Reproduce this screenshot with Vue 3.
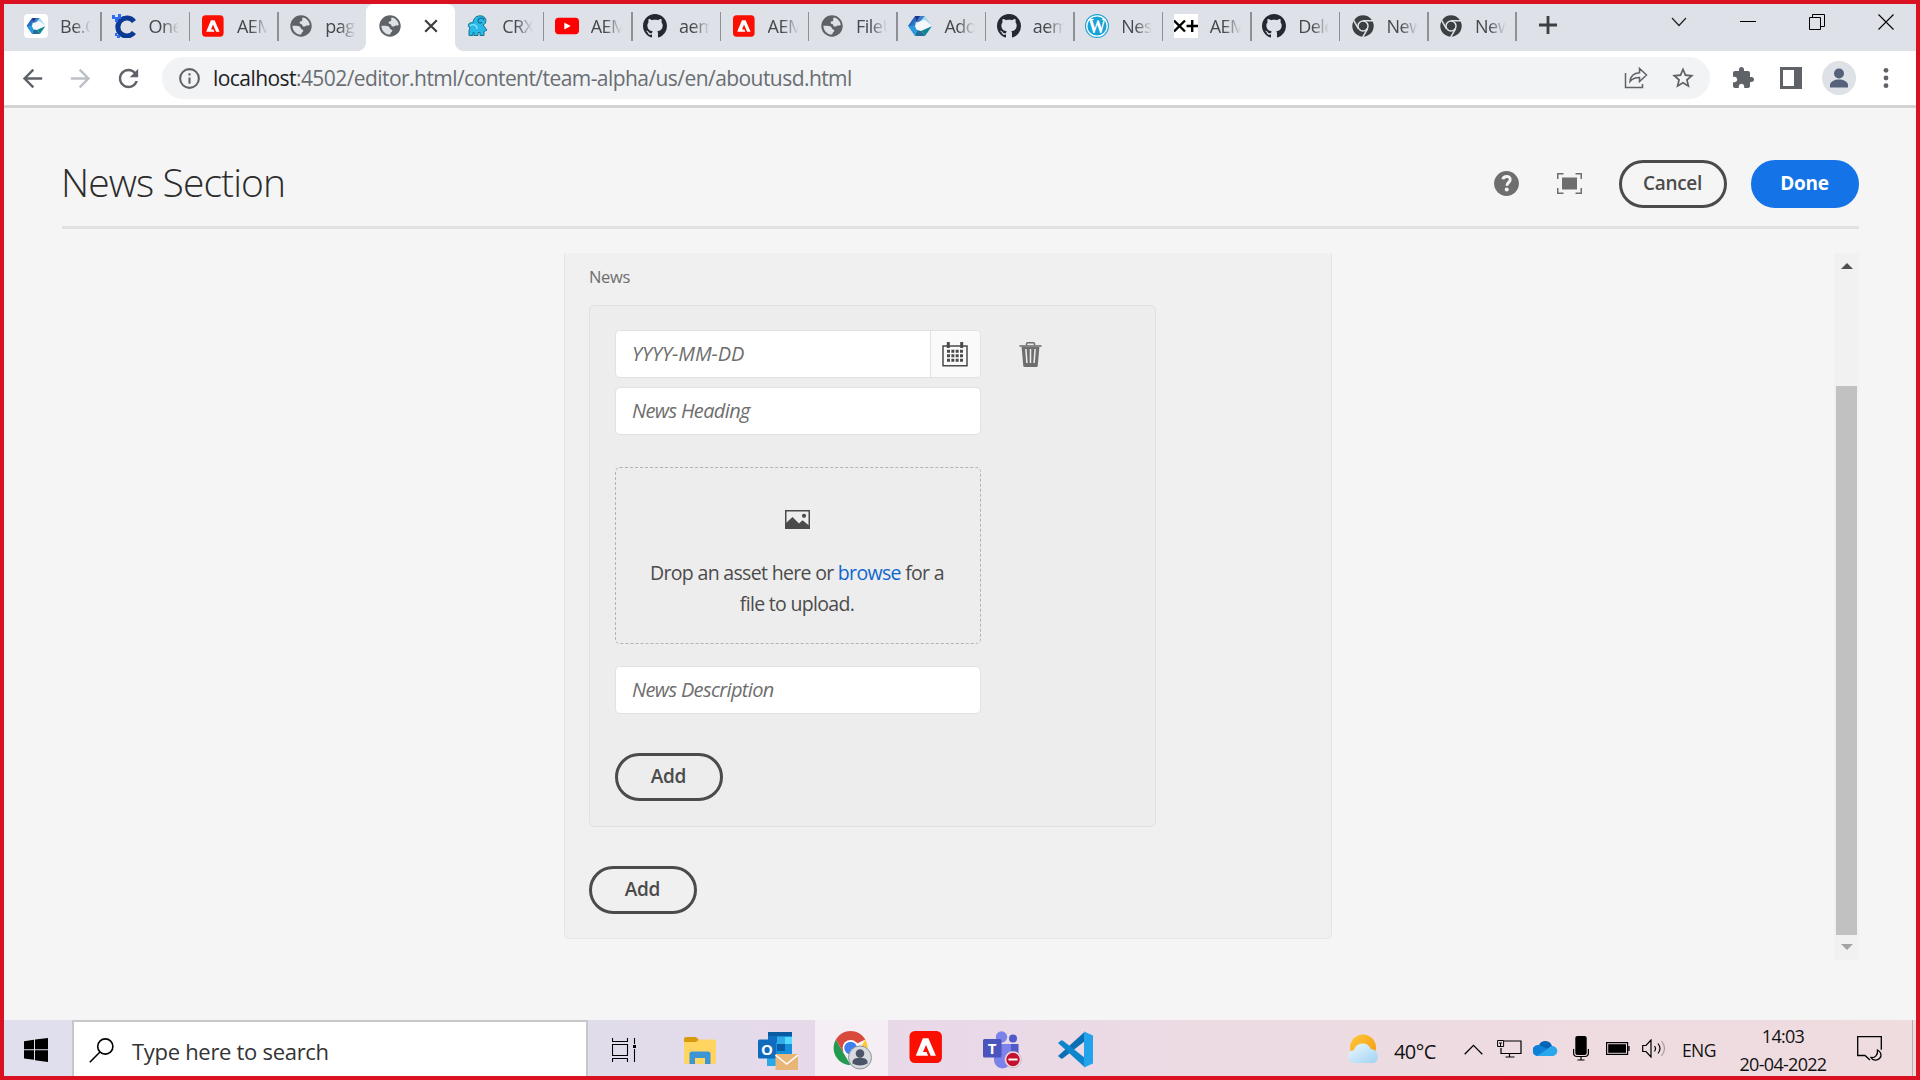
<script setup>
import { ref } from 'vue'

const tabs = [
  { icon: 'be', title: 'Be.C' },
  { icon: 'one', title: 'One' },
  { icon: 'adobe', title: 'AEM' },
  { icon: 'globe', title: 'pag' },
  { icon: 'globe', title: '', active: true },
  { icon: 'crx', title: 'CRX' },
  { icon: 'youtube', title: 'AEM' },
  { icon: 'github', title: 'aem' },
  { icon: 'adobe', title: 'AEM' },
  { icon: 'globe', title: 'FileU' },
  { icon: 'hex', title: 'Ado' },
  { icon: 'github', title: 'aem' },
  { icon: 'wordpress', title: 'Nes' },
  { icon: 'xplus', title: 'AEM' },
  { icon: 'github', title: 'Dele' },
  { icon: 'chromium', title: 'New' },
  { icon: 'chromium', title: 'New' }
]

const date = ref('')
const heading = ref('')
const description = ref('')
</script>

<template>
  <div class="screen">
    <svg class="sprites" width="0" height="0" aria-hidden="true">
      <defs>
        <linearGradient id="hexDark" x1="0" y1="0" x2="1" y2="1">
          <stop offset="0" stop-color="#1c1f8c" />
          <stop offset="1" stop-color="#2f9be0" />
        </linearGradient>
        <linearGradient id="sun" x1="0" y1="0" x2="1" y2="1">
          <stop offset="0" stop-color="#ffc93a" />
          <stop offset="1" stop-color="#f6960c" />
        </linearGradient>
        <linearGradient id="cloud" x1="0" y1="0" x2="1" y2="1">
          <stop offset="0" stop-color="#eef9ff" />
          <stop offset="1" stop-color="#9fd2f2" />
        </linearGradient>
      </defs>
      <symbol id="hex" viewBox="0 0 24 24">
        <path d="M7 2h10l-5 6H8z" fill="#3b7fc4" />
        <path d="M7 2l1 6-1 4H0z" fill="url(#hexDark)" />
        <path d="M7 2h5l-4 6z" fill="#20308f" />
        <path d="M0 12h7l2 4-2 6z" fill="#2a98de" />
        <path d="M7 22l2-6h4l4 6z" fill="#1f6f9c" />
        <path d="M13 16l11-4-7 10z" fill="#0f8793" />
        <path d="M17 2l7 10-8-5-4 1z" fill="#a8d8f0" />
        <path d="M12 7l5-1 7 6-11 5-4-1-2-4z" fill="#f4f8fc" />
      </symbol>
      <symbol id="be" viewBox="0 0 24 24">
        <rect width="24" height="24" rx="4" fill="#fff" />
        <use href="#hex" x="2.5" y="2.5" width="19" height="19" />
      </symbol>
      <symbol id="one" viewBox="0 0 24 24">
        <path d="M22 7.5A9 9 0 1 0 22 18.5" fill="none" stroke="#0b3a94" stroke-width="5" />
        <path d="M0 1h3v2h3V0h3v5H6v3H3V5H0zM3 19h2v2h3v3H5v-2H3z" fill="#2e6cf6" />
      </symbol>
      <symbol id="adobe" viewBox="0 0 24 24">
        <rect x="1" y="1.3" width="21.6" height="21.4" rx="3.6" fill="#fa0f00" />
        <path d="M9.9 6.2h3.7l5 11.6h-3.5L12 10.6l-2 4.8h2.4l1 2.4H5.2z" fill="#fff" />
      </symbol>
      <symbol id="globe" viewBox="0 0 24 24">
        <circle cx="12" cy="12" r="10.7" fill="#5f6368" />
        <path d="M13.8 3.5c3.5.6 6.4 3.5 6.9 7.2-1.2 1.6-2.8.3-4 1.3-1.2 1-3.4.6-3.5-1-.1-1.3-2.6-.7-2.6-2.2 0-1.7 2.5-1 2.7-2.5.1-1-.7-1.6.5-2.8z" fill="#dee1e6" />
        <path d="M3.4 11.7c2.8 0 6.4-.2 7.8 1.3 1 1.1.4 2.1 2 2.4 1.5.3 1.3 1.9.3 2.7-1 .7-.5 1.7-1.7 2.5-4.7-.1-8.3-4-8.4-8.9z" fill="#dee1e6" />
      </symbol>
      <symbol id="crx" viewBox="0 0 24 24">
        <path d="M3 13C1 10 4 8 7 9c0-5 4-8 9-7 5 1 5 8 1 9l4 5-3 1.500v4h-4v-3h-2v3H8v-3H7v3H3v-5l1-3z" fill="#29b8e8" stroke="#16758f" />
        <path d="M18 6c-1-3-6-2-6 1 0 2 3 3 4 1" fill="none" stroke="#0f6d8a" stroke-width="1.200" />
        <path d="M4 12c3-3 7-1 7 3" fill="none" stroke="#7be0f8" stroke-width="1.500" />
      </symbol>
      <symbol id="youtube" viewBox="0 0 24 24">
        <rect y="3.8" width="24" height="16.4" rx="3.6" fill="#f00" />
        <path d="M9.3 8.4v7.2l6.400-3.600z" fill="#fff" />
      </symbol>
      <symbol id="github" viewBox="0 0 16 16">
        <path fill="#24292f" d="M8 0C3.580 0 0 3.580 0 8c0 3.540 2.290 6.530 5.470 7.590.4.070.55-.17.55-.38 0-.19-.01-.82-.01-1.490-2.010.370-2.530-.490-2.690-.940-.090-.230-.480-.940-.820-1.130-.280-.150-.680-.520-.010-.530.630-.010 1.080.580 1.230.820.720 1.210 1.870.870 2.330.660.070-.520.280-.870.510-1.070-1.780-.200-3.640-.890-3.640-3.950 0-.870.310-1.590.820-2.150-.080-.200-.360-1.020.080-2.120 0 0 .670-.210 2.200.820.640-.180 1.320-.270 2-.270.680 0 1.360.090 2 .270 1.530-1.040 2.200-.820 2.200-.820.440 1.100.160 1.920.080 2.120.510.560.820 1.270.820 2.150 0 3.070-1.870 3.750-3.650 3.950.290.250.540.730.540 1.480 0 1.070-.010 1.930-.010 2.200 0 .210.150.460.550.380A8.010 8.010 0 0 0 16 8c0-4.420-3.580-8-8-8z" />
      </symbol>
      <symbol id="wordpress" viewBox="0 0 24 24">
        <circle cx="12" cy="12" r="12" fill="#17a3d6" />
        <circle cx="12" cy="12" r="10.2" fill="none" stroke="#fff" stroke-width="1.300" />
        <text class="wp" x="12" y="18.500" text-anchor="middle" textLength="18" lengthAdjust="spacingAndGlyphs" fill="#fff">W</text>
      </symbol>
      <symbol id="xplus" viewBox="0 0 24 24">
        <rect width="24" height="24" fill="#fff" />
        <path d="M0 6.500l11 11M11 6.500l-11 11M12.500 12H24M18.200 6v12" stroke="#000" stroke-width="2.400" fill="none" />
      </symbol>
      <symbol id="chromium" viewBox="0 0 24 24">
        <circle cx="12" cy="12" r="10.7" fill="#3c4043" />
        <circle cx="12" cy="12" r="5" fill="none" stroke="#dee1e6" stroke-width="1.500" />
        <path d="M12 6.700h10M7.300 14.600L2.500 6.200M16.700 14.600l-5 8.500" stroke="#dee1e6" stroke-width="1.500" />
      </symbol>
    </svg>

    <header class="tabstrip">
      <div v-for="(tab, i) in tabs" :key="i" class="tab" :class="{ active: tab.active, plain: i === 3 }">
        <svg class="favicon"><use :href="'#' + tab.icon" /></svg>
        <span v-if="!tab.active" class="tab-title">{{ tab.title }}</span>
        <svg v-else class="tab-close" viewBox="0 0 12 12"><path d="M1 1l10 10M11 1L1 11" stroke="#3c4043" stroke-width="1.900" /></svg>
      </div>
      <svg class="new-tab" viewBox="0 0 18 18"><path d="M9 0v18M0 9h18" stroke="#3c4043" stroke-width="2.800" /></svg>
      <div class="window-controls">
        <svg width="16" height="10" viewBox="0 0 16 10"><path d="M1 1l7 7.500L15 1" fill="none" stroke="#222" stroke-width="1.200" /></svg>
        <svg width="16" height="16" viewBox="0 0 16 16"><path d="M0 7.500h16" stroke="#000" /></svg>
        <svg width="16" height="16" viewBox="0 0 16 16"><path d="M.5 3.500h11v12H.5zM3.500 3.500v-3h12v12h-4" fill="none" stroke="#000" /></svg>
        <svg width="16" height="16" viewBox="0 0 16 16"><path d="M.5.5l15 15M15.500.5l-15 15" stroke="#000" stroke-width="1.100" /></svg>
      </div>
    </header>

    <nav class="toolbar">
      <svg class="nav-icon" viewBox="0 0 24 24"><path fill="#5f6368" d="M20 11H7.830l5.590-5.590L12 4l-8 8 8 8 1.410-1.410L7.830 13H20z" /></svg>
      <svg class="nav-icon" viewBox="0 0 24 24"><path fill="#bdc1c6" d="M4 11h12.170l-5.590-5.590L12 4l8 8-8 8-1.410-1.410L16.170 13H4z" /></svg>
      <svg class="nav-icon" viewBox="0 0 24 24"><path fill="#5f6368" d="M17.650 6.350C16.200 4.900 14.210 4 12 4c-4.420 0-7.990 3.580-7.990 8s3.570 8 7.990 8c3.730 0 6.840-2.550 7.730-6h-2.080c-.82 2.330-3.040 4-5.650 4-3.310 0-6-2.690-6-6s2.690-6 6-6c1.660 0 3.140.69 4.220 1.780L13 11h7V4z" /></svg>
      <div class="omnibox">
        <svg width="25" height="25" viewBox="0 0 24 24"><circle cx="12" cy="12" r="9" fill="none" stroke="#5f6368" stroke-width="2" /><path d="M11 7h2v2h-2zM11 11h2v6h-2z" fill="#5f6368" /></svg>
        <span class="url"><b>localhost</b>:4502/editor.html/content/team-alpha/us/en/aboutusd.html</span>
        <svg class="share" width="24" height="24" viewBox="0 0 24 24"><path d="M1.500 7v14.500h17V18M6 15.500c.5-6 4-8.500 9.500-8.800V2.500l7 6.500-7 6.500v-4c-4-.1-7 1-9.500 4z" fill="none" stroke="#5f6368" stroke-width="1.500" /></svg>
        <svg width="26" height="26" viewBox="0 0 24 24"><path fill="#5f6368" d="M22 9.240l-7.190-.62L12 2 9.190 8.630 2 9.240l5.460 4.730L5.820 21 12 17.270 18.180 21l-1.630-7.030L22 9.240zM12 15.400l-3.760 2.270 1-4.280-3.320-2.880 4.380-.38L12 6.100l1.710 4.040 4.380.38-3.320 2.880 1 4.280L12 15.400z" /></svg>
      </div>
      <div class="actions">
        <svg width="24" height="24" viewBox="0 0 24 24"><path fill="#5f6368" d="M20.500 11H19V7c0-1.100-.9-2-2-2h-4V3.500C13 2.120 11.880 1 10.500 1S8 2.120 8 3.500V5H4c-1.100 0-1.990.9-1.990 2v3.800H3.500c1.490 0 2.700 1.210 2.700 2.700s-1.210 2.700-2.700 2.700H2V20c0 1.100.9 2 2 2h3.800v-1.500c0-1.490 1.210-2.700 2.700-2.700s2.700 1.210 2.700 2.700V22H17c1.100 0 2-.9 2-2v-4h1.500c1.380 0 2.500-1.120 2.500-2.500S21.880 11 20.500 11z" /></svg>
        <svg width="22" height="22" viewBox="0 0 22 22"><path fill="#5f6368" fill-rule="evenodd" d="M0 0h22v22H0zM3 3v16h11V3z" /></svg>
        <svg width="34" height="34" viewBox="0 0 34 34"><circle cx="17" cy="17" r="17" fill="#dee1e6" /><circle cx="17" cy="12.500" r="5" fill="#55607a" /><path d="M8 26.500v-2.500c0-3.500 5-5.500 9-5.500s9 2 9 5.500v2.500z" fill="#55607a" /></svg>
        <svg width="6" height="22" viewBox="0 0 6 22"><circle cx="3" cy="3.300" r="2.400" fill="#5f6368" /><circle cx="3" cy="11" r="2.400" fill="#5f6368" /><circle cx="3" cy="18.700" r="2.400" fill="#5f6368" /></svg>
      </div>
    </nav>

    <main class="page">
      <div class="dialog-header">
        <h1>News Section</h1>
        <svg class="help" width="25" height="25" viewBox="0 0 25 25"><circle cx="12.500" cy="12.500" r="12.400" fill="#6e6e6e" /><path d="M8.900 8.300c.6-3.700 7.300-3.900 7.300.1 0 3-3.300 3-3.300 6.300" fill="none" stroke="#f5f5f5" stroke-width="2.900" /><circle cx="12.700" cy="18.500" r="2" fill="#f5f5f5" /></svg>
        <svg class="full" width="25" height="21" viewBox="0 0 25 21"><path d="M.75 6V.75H6.500M18.500.75h5.750V6M24.250 15v5.250H18.500M6.500 20.250H.75V15" fill="none" stroke="#6e6e6e" stroke-width="1.500" /><path d="M5 4.500h15v12H5z" fill="#6e6e6e" /></svg>
        <button class="btn cancel">Cancel</button>
        <button class="btn primary">Done</button>
      </div>

      <div class="dialog-body">
        <section class="multifield outer">
          <label class="label">News</label>
          <div class="multifield inner">
            <div class="row">
              <div class="date">
                <input v-model="date" class="field" placeholder="YYYY-MM-DD">
                <span class="calendar">
                  <svg width="26" height="25" viewBox="0 0 26 25">
                    <path d="M1 4h24v19.800H1z" fill="none" stroke="#4b4b4b" stroke-width="1.500" />
                    <path d="M6.300 0v6M19.700 0v6" stroke="#4b4b4b" stroke-width="3" />
                    <path d="M5 9.200h16M5 13.700h16M5 18.200h16" stroke="#4b4b4b" stroke-width="3" stroke-dasharray="3 1.333" />
                  </svg>
                </span>
              </div>
              <svg class="trash" width="23" height="25" viewBox="0 0 23 25">
                <path d="M7.500 3.500V1.800q0-1 1-1h6q1 0 1 1v1.700" fill="none" stroke="#6e6e6e" stroke-width="1.500" />
                <path d="M.5 3.200h22v1.600h-22z" fill="#6e6e6e" />
                <path d="M2.600 5h17.800l-1.700 19q-.1 1-1.200 1h-12q-1 0-1.200-1z" fill="#6e6e6e" />
                <path d="M6.900 7l1 14M11.500 7v14M16.100 7l-1 14" stroke="#ededed" stroke-width="1.500" />
              </svg>
            </div>
            <input v-model="heading" class="field heading" placeholder="News Heading">
            <div class="dropzone">
              <svg width="25" height="19" viewBox="0 0 25 19">
                <path d="M.75.75h23.500v17.500H.75z" fill="none" stroke="#4b4b4b" stroke-width="1.500" />
                <path d="M1 13l6.500-6 6.500 6.500 3.500-3.200L24 15.500V18H1z" fill="#4b4b4b" />
                <circle cx="19" cy="5.800" r="2.100" fill="#4b4b4b" />
              </svg>
              <p>Drop an asset here or <a>browse</a> for a<br>file to upload.</p>
            </div>
            <input v-model="description" class="field description" placeholder="News Description">
            <button class="btn add">Add</button>
          </div>
          <button class="btn add">Add</button>
        </section>
        <div class="scrollbar">
          <span class="arrow up"></span>
          <span class="thumb"></span>
          <span class="arrow down"></span>
        </div>
      </div>
    </main>

    <footer class="taskbar">
      <div class="start">
        <svg width="24" height="24" viewBox="0 0 24 24"><path d="M0 3.200L10 1.800v9.500H0zM11 1.600L24 0v11.300H11zM0 12.300h10v9.500L0 20.500zM11 12.300h13V24l-13-1.700z" /></svg>
      </div>
      <div class="search">
        <svg width="25" height="25" viewBox="0 0 25 25"><circle cx="16.300" cy="8.500" r="7.600" fill="none" stroke="#000" stroke-width="1.600" /><path d="M11 14L.8 24.200" stroke="#000" stroke-width="1.600" /></svg>
        <span>Type here to search</span>
      </div>
      <div class="apps">
        <div class="app taskview">
          <svg width="25" height="24" viewBox="0 0 25 24"><path d="M.5 0v3.500h15V0M.5 24v-3.500h15V24M.5 6.500h15v11H.5zM22.500 0v6M22.500 11v13" fill="none" stroke="#000" stroke-width="1.100" /><path d="M21 7h3v3h-3z" /></svg>
        </div>
        <div class="app folder">
          <svg width="34" height="27" viewBox="0 0 34 27"><path d="M1 2q0-2 2-2h10l3 3v3H1z" fill="#d89b10" /><path d="M1 5h12l3-2.500h15q2 0 2 2V25q0 2-2 2H3q-2 0-2-2z" fill="#ffd460" /><path d="M6.500 27V17q0-2.500 2.500-2.500h16q2.500 0 2.500 2.500v10H22v-6H12v6z" fill="#3d95d6" /></svg>
        </div>
        <div class="app outlook">
          <svg width="40" height="40" viewBox="0 0 40 40"><path d="M10 1h24v24H10z" fill="#1490df" /><path d="M10 1h24v4H10z" fill="#0a5ba0" /><path d="M10 5h9v6h-9z" fill="#0f6fc0" /><path d="M19 6h8v7h-8z" fill="#32a9e8" /><path d="M27 6h7v7h-7z" fill="#54daff" /><path d="M19 13h8v7h-8z" fill="#0a5ca5" /><path d="M9 23h10v12H9z" fill="#2aa9e8" /><rect y="8.500" width="18" height="19" rx="1.500" fill="#0f6cbd" /><text x="9" y="23.500" text-anchor="middle" font-family="Open Sans, sans-serif" font-weight="bold" font-size="15" fill="#fff">O</text><path d="M17.500 23H40v16H17.500z" fill="#e9b679" /><path d="M17.500 24l11.200 9L40 24" fill="none" stroke="#fff" stroke-width="1.500" /></svg>
        </div>
        <div class="app current">
          <svg width="40" height="40" viewBox="0 0 40 40"><path d="M17.600 35A17 17 0 0 1 2.900 9.500l7.300 13z" fill="#229a50" /><path d="M32.300 9.500A17 17 0 0 1 17.600 35l7.300-12.800z" fill="#fcc934" /><path d="M2.900 9.500A17 17 0 0 1 32.300 9.500L25 13 10 22z" fill="#d94a3d" /><circle cx="17.600" cy="18" r="8" fill="#fff" /><circle cx="17.600" cy="18" r="6.300" fill="#3f7fee" /><circle cx="27" cy="27.500" r="11.500" fill="#d7dbe0" stroke="#8d949c" /><circle cx="27" cy="23.500" r="4.300" fill="#4c5567" /><path d="M19.500 33.500v-1.500c0-3.500 4-4.300 7.500-4.300s7.500.8 7.500 4.300v1.500q-3.500 2-7.500 2t-7.500-2z" fill="#4c5567" /></svg>
        </div>
        <div class="app">
          <svg class="adobe" width="36" height="36"><use href="#adobe" /></svg>
        </div>
        <div class="app teams">
          <svg width="40" height="40" viewBox="0 0 40 40"><circle cx="19.500" cy="7" r="5.700" fill="#7b83eb" /><circle cx="31" cy="8.500" r="4" fill="#5059c9" /><path d="M27 14h9.500v12a6 6 0 0 1-9.500 4z" fill="#5059c9" /><path d="M12 14h17v16a8.500 8.500 0 0 1-17 0z" fill="#7b83eb" /><rect x="1" y="9" width="18.500" height="18.500" rx="1.500" fill="#4b53bc" /><text x="10.200" y="23.700" text-anchor="middle" font-family="Open Sans, sans-serif" font-weight="bold" font-size="15" fill="#fff">T</text><circle cx="31" cy="29.500" r="8.300" fill="#eee4ec" stroke="#b9a3ae" stroke-width=".6" /><circle cx="31" cy="29.500" r="6.700" fill="#c4112f" /><path d="M26.500 29.500h9" stroke="#fff" stroke-width="2" /></svg>
        </div>
        <div class="app">
          <svg width="37" height="37" viewBox="0 0 37 37"><path d="M1 25l3 2.500q1 .5 2-.2L28 10V.5z" fill="#0a70b5" /><path d="M1 12l3-2.500q1-.5 2 .2L28 27v9.500z" fill="#0d85cc" /><path d="M27 .5L36 4.500v28l-9 4z" fill="#23a3ec" /></svg>
        </div>
      </div>

      <div class="tray">
        <svg width="32" height="30" viewBox="0 0 32 30"><circle cx="15" cy="13.500" r="13" fill="url(#sun)" /><path d="M7 29a6.500 6.500 0 0 1-1-13 9 9 0 0 1 17-1 7.500 7.500 0 0 1 3 14z" fill="url(#cloud)" /></svg>
        <span class="temp">40°C</span>
        <svg class="caret" width="19" height="11" viewBox="0 0 19 11"><path d="M.7 10.200L9.500 1.300l8.800 8.900" fill="none" stroke="#000" stroke-width="1.300" /></svg>
        <svg class="net" width="25" height="19" viewBox="0 0 25 19"><path d="M7 2h17v12.500H4V9M12.500 15v3M8.500 18h9" fill="none" stroke="#000" stroke-width="1.200" /><path d="M.6 1.500h6v6h-6zM2 4h3M3.500 4v3" fill="none" stroke="#000" /></svg>
        <svg class="onedrive" width="25" height="17" viewBox="0 0 25 17"><path d="M6 5a7 7 0 0 1 13 1l-7 5z" fill="#0364b8" /><path d="M4 16A5.300 5.300 0 0 1 6 5l9 4-8 7z" fill="#0f7fd8" /><path d="M4 16L18.500 6a5 5 0 0 1 1.500 10z" fill="#28a8ea" /></svg>
        <svg class="mic" width="16" height="25" viewBox="0 0 16 25"><rect x="2.300" y="0" width="11.400" height="19" rx="2" /><path d="M.6 13v4q0 3.500 3.500 3.500h7.800q3.500 0 3.500-3.500v-4M8 20v4M4.500 24h7" fill="none" stroke="#000" stroke-width="1.200" /></svg>
        <svg class="battery" width="24" height="13" viewBox="0 0 24 13"><path d="M.6.6h21v11.800H.6zM23 4v5" fill="none" stroke="#000" stroke-width="1.200" /><path d="M2.200 2.200h17.800v8.600H2.200z" /></svg>
        <svg class="volume" width="25" height="19" viewBox="0 0 25 19"><path d="M.7 6.500H4L9 1v17l-5-5.500H.7zM12.500 7q2 2.500 0 5.500M16 4.500q4 5 0 10" fill="none" stroke="#000" stroke-width="1.200" /><path d="M19.500 2q6 7.500 0 15" fill="none" stroke="#a9979b" stroke-width="1.200" /></svg>
        <span class="lang">ENG</span>
        <div class="clock"><span>14:03</span><span class="day">20-04-2022</span></div>
        <svg class="notice" width="26" height="26" viewBox="0 0 26 26"><path d="M13 24l-5-4.500H.7V.7h23.600v13" fill="none" stroke="#000" stroke-width="1.300" /><path d="M20.500 14c4 2 4.500 6 2 8.500s-7 2-8.500-1c4 .5 7-2.500 6.500-7.500z" fill="none" stroke="#000" stroke-width="1.300" /></svg>
      </div>
    </footer>
  </div>
</template>

<style>
body {
  overflow: hidden;
}
</style>

<style scoped>
* {
  box-sizing: border-box;
}

.screen {
  width: 1920px;
  height: 1080px;
  border: 4px solid #d91120;
  display: flex;
  flex-direction: column;
  font-family: 'Open Sans', 'Noto Sans', sans-serif;
  background: #f5f5f5;
}

.sprites {
  position: absolute;
}

svg {
  display: block;
  flex: none;
}

.wp {
  font-family: 'Liberation Serif', serif;
  font-size: 20px;
  font-weight: bold;
}

/* browser tabs */
.tabstrip {
  height: 47px;
  flex: none;
  display: flex;
  align-items: flex-start;
  background: #dee1e8;
  padding-left: 8.5px;
}

.tab {
  position: relative;
  width: 88.45px;
  height: 47px;
  flex: none;
  display: flex;
  align-items: center;
  padding: 0 0 3px 11.5px;
}

.tab::after {
  content: '';
  position: absolute;
  right: -1px;
  top: 8px;
  width: 1.5px;
  height: 29px;
  background: #8d9095;
}

.tab.active {
  background: #fff;
  border-radius: 8px 8px 0 0;
  padding-left: 12px;
}

.tab.active::before {
  content: '';
  position: absolute;
  left: -8px;
  bottom: 0;
  width: 8px;
  height: 8px;
  background: radial-gradient(circle at 0 0, transparent 7.5px, #fff 8px);
}

.tab.active::after {
  left: 88.45px;
  right: auto;
  top: auto;
  bottom: 0;
  width: 8px;
  height: 8px;
  background: radial-gradient(circle at 100% 0, transparent 7.5px, #fff 8px);
}

.tab.plain::after {
  display: none;
}

.favicon {
  width: 24px;
  height: 24px;
}

.tab-title {
  width: 31px;
  margin-left: 12px;
  overflow: hidden;
  white-space: nowrap;
  font-size: 18px;
  letter-spacing: -0.5px;
  color: #45484d;
  -webkit-mask-image: linear-gradient(90deg, #000 45%, transparent 100%);
  mask-image: linear-gradient(90deg, #000 45%, transparent 100%);
}

.tab-close {
  width: 14px;
  height: 14px;
  margin-left: 22px;
}

.new-tab {
  width: 18px;
  height: 18px;
  margin: 12px 0 0 23px;
}

.window-controls {
  display: flex;
  align-items: center;
  gap: 53px;
  margin: 9.5px 22px 0 auto;
}

/* address bar */
.toolbar {
  height: 57px;
  flex: none;
  display: flex;
  align-items: center;
  background: #fff;
  border-bottom: 3px solid #d3d3d3;
  padding-left: 14px;
}

.nav-icon {
  width: 29px;
  height: 29px;
  margin-right: 19px;
}

.omnibox {
  width: 1548px;
  height: 42px;
  display: flex;
  align-items: center;
  background: #f1f3f4;
  border-radius: 21px;
  padding: 0 14px 0 15px;
}

.url {
  flex: 1;
  margin-left: 11px;
  font-size: 21px;
  letter-spacing: -0.56px;
  color: #6a6e73;
  white-space: nowrap;
}

.url b {
  font-weight: normal;
  color: #202124;
}

.share {
  margin-right: 22px;
}

.actions {
  display: flex;
  align-items: center;
  margin-left: 21px;
}

.actions svg:nth-child(2) {
  margin-left: 25px;
}

.actions svg:nth-child(3) {
  margin-left: 20px;
}

.actions svg:nth-child(4) {
  margin-left: 27px;
}

/* dialog */
.page {
  height: 912px;
  flex: none;
  padding: 52px 57px 0 58px;
}

.dialog-header {
  height: 69px;
  display: flex;
  align-items: flex-start;
  border-bottom: 3px solid #e1e1e1;
}

h1 {
  flex: 1;
  margin: 0 0 0 -1px;
  font-size: 39px;
  font-weight: 300;
  line-height: 44px;
  letter-spacing: -0.9px;
  color: #2c2c2c;
}

.help {
  margin: 11px 38px 0 0;
}

.full {
  margin: 13px 37px 0 0;
}

.btn {
  width: 108px;
  height: 48px;
  border: 3px solid #4b4b4b;
  border-radius: 24px;
  background: transparent;
  padding: 0 1px 2px 0;
  font-family: inherit;
  font-size: 19px;
  font-weight: 600;
  letter-spacing: -0.3px;
  color: #4b4b4b;
}

.primary {
  margin-left: 24px;
  background: #1473e6;
  border-color: #1473e6;
  color: #fff;
  font-weight: 700;
}

.dialog-body {
  display: flex;
  justify-content: space-between;
  padding: 24px 0 0 502px;
}

.multifield {
  display: flex;
  flex-direction: column;
  align-items: flex-start;
}

.outer {
  width: 768px;
  height: 686px;
  border: 1px solid #e6e6e6;
  border-top: 0;
  border-radius: 0 0 5px 5px;
  background: #f0f0f0;
  padding: 12px 24px 0;
}

.label {
  font-size: 16.5px;
  line-height: 24px;
  letter-spacing: -0.3px;
  color: #6e6e6e;
}

.inner {
  width: 567px;
  height: 522px;
  margin: 16px 0 39px;
  border: 1px solid #e1e1e1;
  border-radius: 5px;
  background: #ededed;
  padding: 24px 25px 0;
}

.row {
  display: flex;
  align-items: center;
}

.date {
  position: relative;
  width: 366px;
}

.field {
  display: block;
  width: 366px;
  height: 48px;
  border: 1px solid #e1e1e1;
  border-radius: 5px;
  background: #fff;
  padding: 0 16px 1px;
  font-family: inherit;
  font-size: 20px;
  letter-spacing: -0.65px;
  color: #4b4b4b;
}

.date .field {
  letter-spacing: -0.1px;
}

.field::placeholder {
  color: #6e6e6e;
  font-style: italic;
  opacity: 1;
}

/* picker button over the right end of the date field */
.calendar {
  position: absolute;
  top: 1px;
  right: 1px;
  width: 50px;
  height: 46px;
  display: flex;
  align-items: center;
  justify-content: center;
  border-left: 1px solid #e1e1e1;
  border-radius: 0 4px 4px 0;
  background: #fafafa;
  padding-right: 2px;
}

.trash {
  margin-left: 38px;
}

.heading {
  margin-top: 9px;
}

.dropzone {
  width: 366px;
  height: 177px;
  margin-top: 32px;
  display: flex;
  flex-direction: column;
  align-items: center;
  border: 1px dashed #b3b3b3;
  border-radius: 5px;
  padding: 42px 2px 0 0;
}

.dropzone p {
  margin: 28px 0 0;
  font-size: 19.5px;
  line-height: 31px;
  letter-spacing: -0.68px;
  text-align: center;
  color: #4b4b4b;
}

.dropzone a {
  color: #0d66d0;
}

.description {
  margin: 22px 0 39px;
}

.scrollbar {
  width: 25px;
  height: 707px;
  display: flex;
  flex-direction: column;
  align-items: center;
  background: #f1f1f1;
}

.arrow {
  border: 6px solid transparent;
}

.arrow.up {
  margin-top: 4px;
  border-bottom-color: #505050;
}

.thumb {
  width: 21px;
  height: 549px;
  margin-top: 117px;
  background: #c1c1c1;
}

.arrow.down {
  margin-top: 9px;
  border-top-color: #a3a3a3;
}

/* taskbar */
.taskbar {
  height: 56px;
  flex: none;
  display: flex;
  background: linear-gradient(90deg, #dfdfed 0%, #e1dcea 32%, #e9d9e9 48%, #ecdbe3 62%, #efdcdf 100%);
}

.start {
  width: 68px;
  padding: 18px 0 0 20px;
}

.search {
  width: 516px;
  display: flex;
  border: 2px solid #c8c8c8;
  border-bottom: 0;
  background: #fff;
  padding: 16px 0 0 15px;
}

.search span {
  margin-left: 18px;
  font-size: 22px;
  line-height: 27px;
  letter-spacing: -0.3px;
  color: #333;
}

.apps {
  display: flex;
}

.app {
  width: 75px;
  height: 56px;
  display: flex;
  align-items: center;
  justify-content: center;
  padding-top: 2px;
}

.app.taskview {
  width: 74px;
  padding: 3px 2px 0 0;
}

.app.folder {
  width: 76px;
  padding-top: 4px;
}

.app.outlook {
  width: 77px;
  padding: 5px 0 0 2px;
}

.app.current {
  width: 73px;
  background: #f6eef5;
  padding: 4px 0 0 3px;
}

.app.teams {
  padding: 4px 0 0 2px;
}

.app .adobe {
  margin-bottom: 4px;
}

.tray {
  flex: 1;
  display: flex;
  align-items: center;
  border-right: 1px solid #b9abae;
  margin-right: 3px;
  padding-top: 1px;
  color: #111;
}

.tray > svg:first-child {
  margin-left: 235px;
}

.temp {
  margin: 6px 0 0 14px;
  width: 44px;
  font-size: 20px;
  letter-spacing: -0.6px;
}

.caret {
  margin: 2px 0 0 26px;
}

.net {
  margin-left: 14px;
}

.onedrive {
  margin-left: 11px;
}

.mic {
  margin-left: 15px;
}

.battery {
  margin-left: 17px;
}

.volume {
  margin-left: 12px;
}

.lang {
  width: 34px;
  margin: 2px 0 0 15px;
  font-size: 17.5px;
  letter-spacing: -0.6px;
}

.clock {
  width: 96px;
  margin: 2px 0 0 19px;
  display: flex;
  flex-direction: column;
  align-items: center;
  font-size: 18px;
  line-height: 28px;
  letter-spacing: -0.7px;
}

.day {
  white-space: nowrap;
}

.notice {
  margin-left: 26px;
}
</style>
